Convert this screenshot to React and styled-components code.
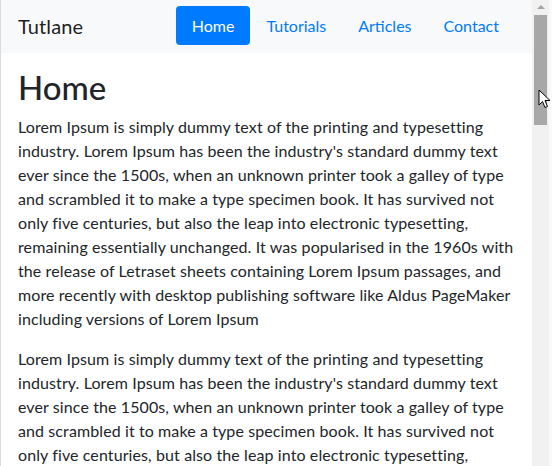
import React from 'react';
import styled, { createGlobalStyle } from 'styled-components';

const Global = createGlobalStyle`
body {
    margin: 0;
    background: #fff;
    overflow: hidden;
    font-family: Lato, "Open Sans", sans-serif;
    color: #212529;
}
`;

const Screen = styled.div`
display: flex;
height: 466px;
position: relative;
`;

const Page = styled.div`
flex: 1;
border-left: 1px solid #dcdcdc;
overflow: hidden;
`;

const Navbar = styled.nav`
display: flex;
align-items: center;
justify-content: space-between;
background: #f8f9fa;
padding: 6px 17px 8px 17px;
`;

const Brand = styled.a`
font-size: 20px;
color: rgba(0, 0, 0, 0.9);
letter-spacing: 0.1px;
`;

const Pills = styled.ul`
display: flex;
list-style: none;
margin: 0;
padding: 0;
`;

const Pill = styled.li`
padding: 8px 16px;
font-size: 16px;
line-height: 23px;
border-radius: 4px;
color: ${p => (p.$active ? '#fff' : '#007bff')};
background: ${p => (p.$active ? '#007bff' : 'transparent')};
`;

const Content = styled.main`
padding: 15px 16px 0 17px;
`;

const Title = styled.h1`
font-size: 33px;
font-weight: 500;
line-height: 1.2;
margin: 0 0 7px;
`;

const Para = styled.p`
font-size: 16px;
line-height: 24px;
letter-spacing: 0.1px;
margin: 0 0 16px;
`;

const Scrollbar = styled.div`
width: 17px;
background: #f1f1f1;
border-right: 3px solid #fafafa;
display: flex;
flex-direction: column;
align-items: center;
`;

const Arrow = styled.div`
width: 0;
height: 0;
margin-top: 5px;
border-left: 4px solid transparent;
border-right: 4px solid transparent;
border-bottom: 4px solid #a3a3a3;
`;

const Thumb = styled.div`
width: 13px;
height: 110px;
margin-top: 6px;
background: #a8a8a8;
`;

const Cursor = styled.svg`
position: absolute;
left: 538px;
top: 89px;
`;

const lorem = "Lorem Ipsum is simply dummy text of the printing and typesetting industry. Lorem Ipsum has been the industry's standard dummy text ever since the 1500s, when an unknown printer took a galley of type and scrambled it to make a type specimen book. It has survived not only five centuries, but also the leap into electronic typesetting, remaining essentially unchanged. It was popularised in the 1960s with the release of Letraset sheets containing Lorem Ipsum passages, and more recently with desktop publishing software like Aldus PageMaker including versions of Lorem Ipsum";

const links = ['Home', 'Tutorials', 'Articles', 'Contact'];

export default function App() {
    return (
        <Screen>
            <Global />
            <Page>
                <Navbar>
                    <Brand>Tutlane</Brand>
                    <Pills>
                        {links.map((l, i) => (
                            <Pill key={l} $active={i === 0}>{l}</Pill>
                        ))}
                    </Pills>
                </Navbar>
                <Content>
                    <Title>Home</Title>
                    <Para>{lorem}</Para>
                    <Para>{lorem}</Para>
                </Content>
            </Page>
            <Scrollbar>
                <Arrow />
                <Thumb />
            </Scrollbar>
            <Cursor width="14" height="21" viewBox="0 0 14 21">
                <path d="M1 1 L1 16 L4.5 12.5 L7 18.5 L9.5 17.5 L7 11.5 L12 11.5 Z" fill="#fff" stroke="#000" strokeWidth="1" strokeLinejoin="round" />
            </Cursor>
        </Screen>
    );
}
